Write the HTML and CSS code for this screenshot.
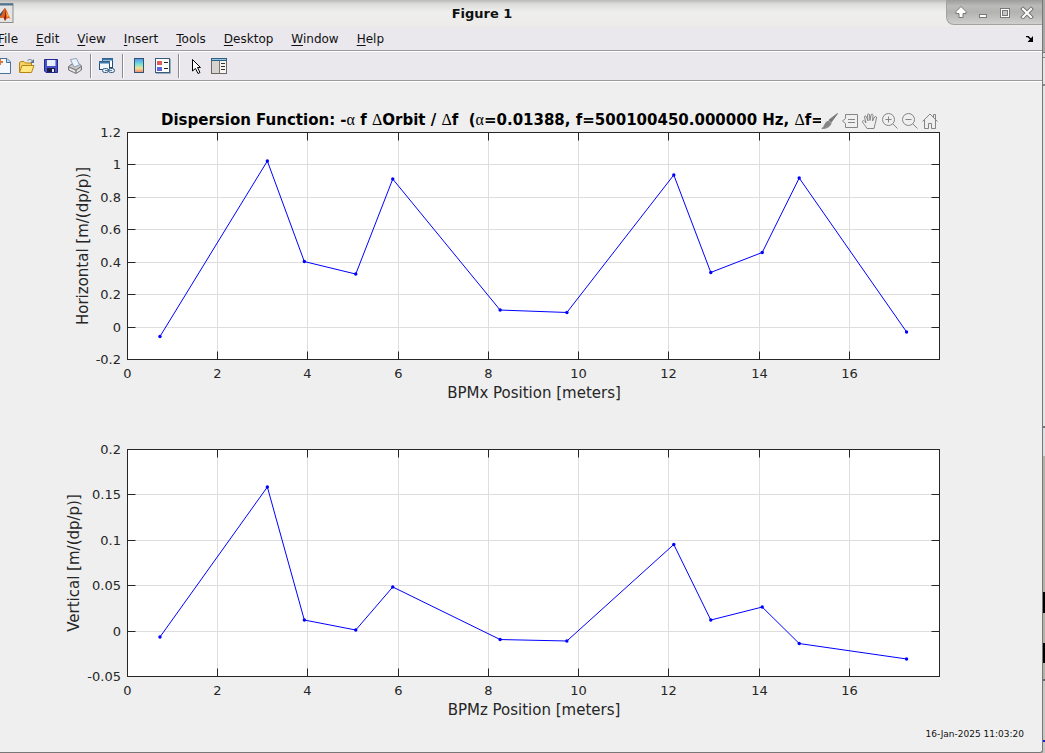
FILE: index.html
```html
<!DOCTYPE html>
<html lang="en">
<head>
  <meta charset="UTF-8">
  <meta name="viewport" content="width=device-width, initial-scale=1.0">
  <title>Figure 1</title>
  <link rel="stylesheet" href="styles.css">
</head>
<body>

  <main class="window">
    <header class="titlebar">
      <svg class="app-icon" width="14" height="20" viewBox="0 0 14 20">
        <rect x="-6" y="0.5" width="19" height="19" fill="#e4e4e4" stroke="#8d8d8d"/>
        <path d="M-6 1.5H13" stroke="#4d7595" stroke-width="2"/>
        <path d="M0 11L5 5L4 14L0 15z" fill="#2e4a6c"/>
        <path d="M0 13C3 12 3 6 5 5C7 6 8 13 11 16C8 14 7 15 5 18C4 14 2 14 0 15z" fill="#e2601c"/>
        <path d="M5 5C6 9 5 12 4 15L5 18C7 14 6 9 5 5z" fill="#8c1d12"/>
        <path d="M6 9L7 14L9 13z" fill="#f5b13a"/>
      </svg>
      <h1>Figure 1</h1>
      <div class="window-buttons">
        <button aria-label="Shade"><svg width="14" height="14" viewBox="0 0 14 14"><path d="M7 1.500L12 6.500V8.500H9V12.500H5V8.500H2V6.500z" fill="#fff" stroke="#777"/></svg></button>
        <button aria-label="Minimize"><svg width="14" height="14" viewBox="0 0 14 14"><rect x="3.500" y="9.500" width="7" height="3" fill="#fff" stroke="#777"/></svg></button>
        <button aria-label="Maximize"><svg width="14" height="14" viewBox="0 0 14 14"><rect x="2.500" y="3.500" width="9" height="9" fill="#fff" stroke="#777"/><rect x="4.500" y="5.500" width="5" height="5" fill="#c4c4c4" stroke="#777"/></svg></button>
        <button aria-label="Close"><svg width="14" height="14" viewBox="0 0 14 14"><path d="M3 4L11 12M11 4L3 12" stroke="#777" stroke-width="4" stroke-linecap="square"/><path d="M3 4L11 12M11 4L3 12" stroke="#fff" stroke-width="2" stroke-linecap="square"/></svg></button>
      </div>
    </header>

    <nav class="menubar">
      <button><u>F</u>ile</button>
      <button><u>E</u>dit</button>
      <button><u>V</u>iew</button>
      <button><u>I</u>nsert</button>
      <button><u>T</u>ools</button>
      <button><u>D</u>esktop</button>
      <button><u>W</u>indow</button>
      <button><u>H</u>elp</button>
      <button class="dock" aria-label="Dock figure"><svg width="8" height="6" viewBox="0 0 8 6"><path d="M0 .5H2L5 3.500" fill="none" stroke="#000" stroke-width="1.500"/><path d="M7 0V6H1.500z" fill="#000"/></svg></button>
    </nav>

    <div class="toolbar">
      <button aria-label="New figure">
        <svg viewBox="0 0 16 16"><path d="M2.500 .5H12L15.500 4V15.500H2.500z" fill="#f3f9ff" stroke="#4a7397"/><path d="M11.500 1V4.500H15" fill="#bfdcf0" stroke="#4a7397"/><path d="M5 1V7M2 4H8" stroke="#e0773a" stroke-width="2"/></svg>
      </button>
      <button aria-label="Open file">
        <svg viewBox="0 0 16 16"><path d="M.5 14V4.500L2 3.500H5L6.500 5H12.500V7" fill="#f2d264" stroke="#b58512"/><path d="M.5 14.500L3 7.500H15L12.500 14.500z" fill="#ffe681" stroke="#b58512"/><path d="M8.500 3C9.500 1 12 1 13.500 3" fill="none" stroke="#5b7798"/><path d="M15 1V5H11z" fill="#5b7798"/></svg>
      </button>
      <button aria-label="Save figure">
        <svg viewBox="0 0 16 16"><path d="M1.500 1.500H14.500V14.500H3L1.500 13z" fill="#4a51c9" stroke="#23288a"/><rect x="4" y="2" width="8" height="6" fill="#e8f1fa"/><path d="M12.500 2V8" stroke="#8d95ee"/><rect x="4" y="10" width="8" height="4" fill="#1b1c40"/><rect x="9" y="11" width="2" height="3" fill="#e8e8f4"/></svg>
      </button>
      <button aria-label="Print figure">
        <svg viewBox="0 0 16 16"><path d="M1.500 8.500L5 6L8 8L12 5.500L14.500 8V12L9 15.500L1.500 12z" fill="#c9c9c9" stroke="#777"/><path d="M3.500 1.500L9.500 .5L12.500 7L7 9z" fill="#eaf4ff" stroke="#8fa0b3"/><path d="M2 9L9 12L14 8.500M9 12V15" fill="none" stroke="#777"/><path d="M3 11L8 13.500M10 13.500L13 11.500" stroke="#f4f4f4"/></svg>
      </button>
      <span class="separator"></span>
      <button aria-label="Link plot">
        <svg viewBox="0 0 16 16"><rect x="3.500" y=".5" width="10" height="9" fill="#fff" stroke="#235078"/><path d="M3 1.500H14" stroke="#3c76a8" stroke-width="2"/><rect x=".5" y="3.500" width="10" height="8" fill="#f4f8fb" stroke="#235078"/><path d="M0 4.500H11" stroke="#3c76a8" stroke-width="2"/><rect x="3.500" y="10.500" width="6" height="4" rx="2" fill="#e0edf6" stroke="#365b80"/><rect x="9.500" y="10.500" width="6" height="4" rx="2" fill="#e0edf6" stroke="#365b80"/><path d="M6 12.500H13" stroke="#5f7f9f"/></svg>
      </button>
      <span class="separator"></span>
      <button aria-label="Insert colorbar">
        <svg viewBox="0 0 16 16"><defs><linearGradient id="colorbar" x2="0" y2="1"><stop offset="0" stop-color="#568ff0"/><stop offset=".4" stop-color="#74e1d6"/><stop offset=".7" stop-color="#f4df93"/><stop offset="1" stop-color="#ef8268"/></linearGradient></defs><rect x="3.500" y=".5" width="9" height="14" fill="url(#colorbar)" stroke="#2f5374"/></svg>
      </button>
      <button aria-label="Insert legend">
        <svg viewBox="0 0 16 16"><rect x=".5" y=".5" width="14" height="14" fill="#fff" stroke="#365b7d"/><path d="M15.500 1V15.500H1" fill="none" stroke="#9aabba"/><rect x="2" y="3" width="5" height="4" fill="#e35b5b"/><rect x="2" y="9" width="5" height="4" fill="#6265e2"/><path d="M9 4.500H13M9 10.500H13" stroke="#222"/></svg>
      </button>
      <span class="separator"></span>
      <button aria-label="Edit plot">
        <svg viewBox="0 0 16 16"><path d="M5.500 1.500V13L8.500 10.500L11 15.500L13 14.500L10.500 9.500H13.500z" fill="#fff" stroke="#000"/></svg>
      </button>
      <button aria-label="Open property inspector">
        <svg viewBox="0 0 16 16"><rect x=".5" y=".5" width="15" height="15" fill="#d6d4d1" stroke="#6b6864"/><path d="M0 1.500H16" stroke="#315f82" stroke-width="3"/><path d="M1 1.500H15" stroke="#90c6e2"/><rect x="8" y="3" width="7" height="12" fill="#f5f4ef"/><path d="M8.500 3V15" stroke="#77736f"/><path d="M10 5.500H14M10 8.500H14M10 11.500H14" stroke="#333"/></svg>
      </button>
    </div>

    <div class="figure">
      <div class="axes-toolbar">
        <button aria-label="Brush data"><svg viewBox="0 0 18 18"><path d="M16.500 1.500L8 8L10 10.500z" fill="#777" stroke="#777"/><path d="M7.500 9L10 11.500C9 15 5 16.500 1 16.500C4 14.500 3.500 10 7.500 9z" fill="#858585"/></svg></button>
        <button aria-label="Data tips"><svg viewBox="0 0 18 18"><path d="M4.500 2.500H16.500V15.500H4.500V11.500L1.500 9L4.500 6.500zM7 7.500H14M7 10.500H14"/></svg></button>
        <button aria-label="Pan"><svg viewBox="0 0 18 18"><path d="M6 16.500C4 13 2.500 12 1.500 10C1 8.500 3 8 4 9.500L5 11L3.500 5C3.500 3.500 5 3.500 5.500 5L7 9L6.500 3C6.500 1.500 8.500 1.500 8.500 3L9 8.500L10 3C10.500 1.500 12 2 12 3.500L11.500 9L13.500 5C14.500 4 16 4.500 15.500 6C14.500 10 14 13 13 16.500z"/></svg></button>
        <button aria-label="Zoom in"><svg viewBox="0 0 18 18"><circle cx="7.500" cy="7.500" r="6"/><path d="M12 12L16.500 16.500M7.500 4.500V10.500M4.500 7.500H10.500"/></svg></button>
        <button aria-label="Zoom out"><svg viewBox="0 0 18 18"><circle cx="7.500" cy="7.500" r="6"/><path d="M12 12L16.500 16.500M4.500 7.500H10.500"/></svg></button>
        <button aria-label="Restore view"><svg viewBox="0 0 18 18"><path d="M1.500 9.500L9 2L16.500 9.500M3.500 8V16.500H7.500V11.500H10.500V16.500H14.500V8M12.500 5V2.500H14.500V7"/></svg></button>
      </div>
      <svg class="axes" id="horizontal" viewBox="0 0 1042 317">
        <text class="axes-title" x="161" y="33">Dispersion Function: -<tspan class="symbol">α</tspan> f <tspan class="symbol">Δ</tspan>Orbit / <tspan class="symbol">Δ</tspan>f&nbsp; (<tspan class="symbol">α</tspan>=0.01388, f=500100450.000000 Hz, <tspan class="symbol">Δ</tspan>f=</text>
      </svg>
      <svg class="axes" id="vertical" viewBox="0 0 1042 317"></svg>
      <time class="timestamp">16-Jan-2025 11:03:20</time>
    </div>
  </main>
  <div class="desktop-edge"></div>

<script>
  // plot box inside each 1042 x 317 drawing
  const box = { left: 127.5, right: 939.5, top: 40.5, bottom: 267.5 };
  const bpm = [0.72, 3.10, 3.92, 5.06, 5.88, 8.26, 9.74, 12.11, 12.93, 14.07, 14.89, 17.27];

  function add(svg, name, attrs, text) {
    const el = document.createElementNS('http://www.w3.org/2000/svg', name);
    for (const key in attrs) el.setAttribute(key, attrs[key]);
    if (text !== undefined) el.textContent = text;
    svg.appendChild(el);
  }

  function plot(id, o) {
    const svg = document.getElementById(id);
    const px = v => box.left + v * (box.right - box.left) / 18;
    const py = v => box.top + (o.max - v) * (box.bottom - box.top) / (o.max - o.min);
    const snap = v => Math.floor(v) + 0.5;
    const w = box.right - box.left;
    const h = box.bottom - box.top;

    add(svg, 'rect', { class: 'plot-area', x: box.left, y: box.top, width: w, height: h });
    let ticks = '';
    for (let v = 0; v <= 16; v += 2) {
      const x = snap(px(v));
      if (v > 0) {
        add(svg, 'path', { class: 'grid', d: `M${x} ${box.top}V${box.bottom}` });
        ticks += `M${x} ${box.top}v8M${x} ${box.bottom}v-8`;
      }
      add(svg, 'text', { class: 'tick x', x: x, y: 286 }, v);
    }
    o.ticks.forEach(v => {
      const y = snap(py(v));
      if (v > o.min && v < o.max) {
        add(svg, 'path', { class: 'grid', d: `M${box.left} ${y}H${box.right}` });
        ticks += `M${box.left} ${y}h8M${box.right} ${y}h-8`;
      }
      add(svg, 'text', { class: 'tick y', x: 121, y: y + 4.5 }, v);
    });
    add(svg, 'path', { class: 'ruler', d: ticks });
    add(svg, 'rect', { class: 'ruler', x: box.left, y: box.top, width: w, height: h });

    add(svg, 'polyline', { class: 'line', points: bpm.map((b, i) => `${px(b)},${py(o.data[i])}`).join(' ') });
    bpm.forEach((b, i) => add(svg, 'circle', { class: 'marker', cx: px(b), cy: py(o.data[i]), r: 1.7 }));

    add(svg, 'text', { class: 'label', x: 534, y: 306 }, o.xlabel);
    add(svg, 'text', { class: 'label', transform: `translate(${o.labelX} 154) rotate(-90)` }, o.ylabel);
  }

  plot('horizontal', {
    min: -0.2, max: 1.2,
    ticks: [-0.2, 0, 0.2, 0.4, 0.6, 0.8, 1, 1.2],
    data: [-0.058, 1.024, 0.404, 0.327, 0.913, 0.105, 0.09, 0.938, 0.337, 0.46, 0.919, -0.03],
    xlabel: 'BPMx Position [meters]',
    ylabel: 'Horizontal [m/(dp/p)]',
    labelX: 88
  });

  plot('vertical', {
    min: -0.05, max: 0.2,
    ticks: [-0.05, 0, 0.05, 0.1, 0.15, 0.2],
    data: [-0.0065, 0.1587, 0.0122, 0.0012, 0.0486, -0.0093, -0.0109, 0.0954, 0.0122, 0.0265, -0.0137, -0.0307],
    xlabel: 'BPMz Position [meters]',
    ylabel: 'Vertical [m/(dp/p)]',
    labelX: 79
  });
</script>

</body>
</html>
```
FILE: styles.css
```css
* {
  box-sizing: border-box;
}

body {
  margin: 0;
  display: flex;
  min-height: 100vh;
  overflow: hidden;
  background: #b8b6ad;
  font-family: "DejaVu Sans", sans-serif;
  font-size: 12px;
  color: #111;
}

button {
  padding: 0;
  border: none;
  background: none;
  font: inherit;
  color: inherit;
}

svg {
  display: block;
}

.window {
  flex: 1;
  min-width: 0;
  display: flex;
  flex-direction: column;
  background: #efefef;
  border-right: 1px solid #777;
  border-bottom: 1px solid #777;
  border-bottom-right-radius: 3px;
}

.desktop-edge {
  width: 2px;
  background: linear-gradient(#a8a8a4 0 52px, #777 52px 53px, #ddd 53px 57px, #888 57px 58px,
    #e4e4e4 58px 84px, #888 84px 86px, #e2e4e4 86px 426px, #777 426px 428px, #dde0e2 428px 456px,
    #b5b3a8 456px 592px, #000 592px 613px, #b5b3a8 613px 643px, #000 643px 663px,
    #b5b3a8 663px 679px, #666 679px 681px, #c8c6c0 681px 740px, #1a1ae0 740px 742px, #c8c6c0 742px);
}

/* title bar */
.titlebar {
  display: flex;
  align-items: flex-start;
  height: 27px;
  background: linear-gradient(#b9b9b7, #dcdcda 4px, #efefed 12px, #ecebea);
}

.app-icon {
  margin-top: 3px;
}

.titlebar h1 {
  flex: 1;
  margin: 0;
  padding-left: 4px;
  font-size: 13px;
  line-height: 27px;
  text-align: center;
}

.window-buttons {
  display: flex;
  align-items: flex-start;
  gap: 8px;
  height: 25px;
  padding: 5px 8px 0 7px;
  background: linear-gradient(#9c9c9a, #bbbbb9 6px, #b2b2b0 12px, #cfcfcd);
  border: 1px solid #a2a2a0;
  border-top: none;
  border-right: none;
  border-bottom-left-radius: 8px;
}

/* menus and tools */
.menubar,
.toolbar {
  display: flex;
  align-items: center;
  background: #eae8ed;
  border-bottom: 1px solid #9b9a9e;
  box-shadow: 0 1px #fff;
}

.menubar {
  height: 24px;
  padding: 0 8px 0 0;
  margin-bottom: 1px;
}

.menubar button {
  padding: 0 9px;
}

.menubar button:first-child {
  margin-left: -11px;
}

.menubar u {
  text-underline-offset: 2px;
  text-decoration-skip-ink: none;
}

.menubar .dock {
  margin-left: auto;
  padding: 0;
}

.toolbar {
  height: 29px;
  margin-bottom: 1px;
  padding-bottom: 1px;
}

.toolbar button {
  width: 24px;
  height: 24px;
  padding: 4px;
}

.toolbar button:first-child {
  margin-left: -9px;
}

.separator {
  width: 2px;
  height: 24px;
  margin: 0 3px;
  background: #89888c;
  border-right: 1px solid #fff;
}

/* figure */
.figure {
  position: relative;
  flex: 1;
  display: flex;
  flex-direction: column;
  padding-top: 10px;
}

.axes {
  width: 100%;
  height: auto;
}

/* floats over the end of the plot title */
.axes-toolbar {
  position: absolute;
  top: 30px;
  right: 9.9%;
  display: flex;
  gap: 2px;
  background: #efefef;
}

.axes-toolbar svg {
  width: 18px;
  height: 18px;
  fill: none;
  stroke: #858585;
}

.plot-area {
  fill: #fff;
}

.grid {
  stroke: #dedede;
}

.ruler {
  fill: none;
  stroke: #262626;
}

.line {
  fill: none;
  stroke: #00f;
}

.marker {
  fill: #00f;
}

.tick {
  font-size: 13px;
  fill: #262626;
}

.x {
  text-anchor: middle;
}

.y {
  text-anchor: end;
}

.label {
  font-size: 15px;
  fill: #262626;
  text-anchor: middle;
}

.axes-title {
  font-size: 15px;
  font-weight: bold;
  fill: #000;
}

.symbol {
  font-family: "Liberation Serif", serif;
  font-size: 16px;
  font-weight: normal;
}

.timestamp {
  align-self: flex-end;
  margin-right: 18px;
  font-size: 9px;
  line-height: 16px;
}
```
